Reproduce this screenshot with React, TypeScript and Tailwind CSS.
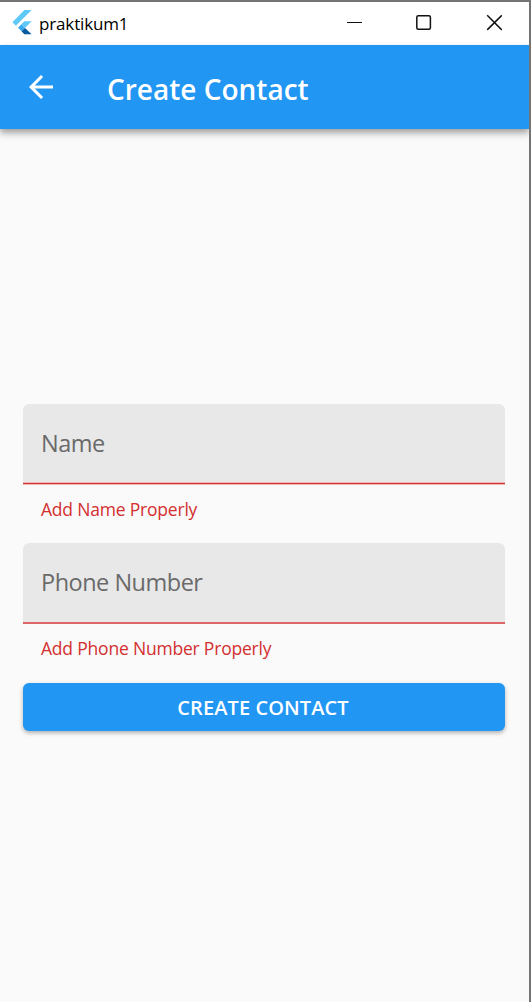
import React from "react";

function FlutterLogo() {
  return (
    <svg width="20" height="25" viewBox="0 0 20 25" className="overflow-visible" aria-hidden="true">
      <path d="M12.4 -0.9H19.6L3.9 14.8L0.4 11.3Z" fill="#5ec9f8" />
      <path d="M12.4 10.3H19.6L13 16.9L9.4 13.3Z" fill="#5ec9f8" />
      <path d="M6 16.7L9.4 13.3L13 16.9L9.5 20.3Z" fill="#39a9ee" />
      <path d="M9.5 20.3L13 16.9L19.6 23.2H12.3Z" fill="#075b9d" />
    </svg>
  );
}

function TitleBar() {
  return (
    <header className="flex h-[43px] items-start bg-white">
      <div className="ml-3 mt-[9px]">
        <FlutterLogo />
      </div>
      <span className="ml-[7px] mt-[9px] text-[17px] leading-[26px] tracking-[-0.15px] text-black">praktikum1</span>
      <div className="ml-auto mr-[27px] mt-3 flex gap-[54px]">
        <svg width="16" height="17" viewBox="0 0 16 17" shapeRendering="crispEdges">
          <path d="M0.5 8.5H15.5" stroke="#111" />
        </svg>
        <svg width="16" height="17" viewBox="0 0 16 17">
          <rect x="0.8" y="1.7" width="13.6" height="13.6" rx="1.5" fill="none" stroke="#111" strokeWidth="1.5" />
        </svg>
        <svg width="16" height="17" viewBox="0 0 16 17">
          <path d="M1.2 1.3L15.8 15.9M15.8 1.3L1.2 15.9" stroke="#111" strokeWidth="1.5" />
        </svg>
      </div>
    </header>
  );
}

function Field({ label, error, boxClass, lineClass }: {
  label: string;
  error: string;
  boxClass: string;
  lineClass: string;
}) {
  return (
    <div>
      <div className={`flex items-center rounded-t-[6px] bg-[#e8e8e8] pb-0.5 pl-[18px] text-[23.5px] leading-8 tracking-[-0.5px] text-[#6a6a6a] ${boxClass}`}>
        {label}
      </div>
      <div className={`-mt-px ${lineClass}`} />
      <p className="pl-[18px] pt-[11px] text-[17.5px] leading-[26px] tracking-[-0.2px] text-[#d32f2f]">{error}</p>
    </div>
  );
}

export default function App() {
  return (
    <div className="flex h-[1002px] w-[531px] flex-col overflow-hidden border-r-2 border-t-2 border-[#747474] bg-[#fafafa] font-['Open_Sans','Noto_Sans',sans-serif]">
      <TitleBar />
      <div className="flex h-[84px] shrink-0 items-center bg-[#2196f3] pl-[23px] text-white shadow-[0_3px_6px_rgba(0,0,0,0.28),0_6px_8px_rgba(0,0,0,0.12)]">
        <svg width="36" height="36" viewBox="0 0 24 24" fill="currentColor">
          <path d="M20 11H7.83l5.59-5.59L12 4l-8 8 8 8 1.41-1.41L7.83 13H20v-2z" />
        </svg>
        <h1 className="ml-12 mt-1 text-[28px] font-semibold leading-9">Create Contact</h1>
      </div>
      <main className="flex flex-col gap-[21px] pl-[23px] pr-6 pt-[275px]">
        <Field
          label="Name"
          error="Add Name Properly"
          boxClass="h-[79px]"
          lineClass="h-[3px] border-y border-[#f0b5b5] bg-[#d03535]"
        />
        <Field
          label="Phone Number"
          error="Add Phone Number Properly"
          boxClass="h-20"
          lineClass="h-0.5 bg-[#dd6666]"
        />
        <button className="mt-px h-12 rounded-[6px] bg-[#2196f3] pr-0.5 pt-0.5 text-[20px] font-semibold tracking-[0.1px] text-white shadow-[0_2px_4px_rgba(0,0,0,0.3)]">
          CREATE CONTACT
        </button>
      </main>
    </div>
  );
}
